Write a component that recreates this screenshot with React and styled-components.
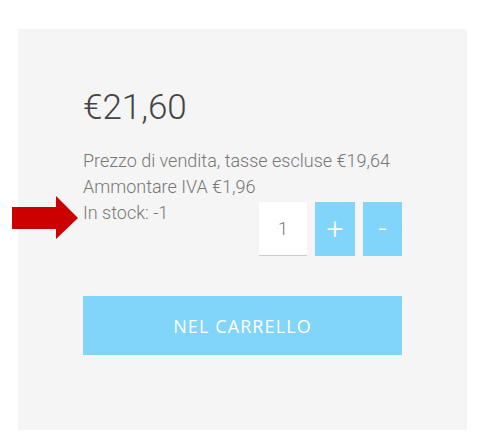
import React from "react";
import styled, { createGlobalStyle } from "styled-components";

const Global = createGlobalStyle`
  html, body { margin: 0; padding: 0; background: #ffffff; }
  body { width: 495px; height: 448px; overflow: hidden; position: relative; }
`;

const Page = styled.div`
  padding: 29px 28px 18px 18px;
  position: relative;
`;

const Panel = styled.section`
  background: #f5f5f5;
  height: 401px;
  box-sizing: border-box;
  padding: 57px 65px 0 65px;
  display: flex;
  flex-direction: column;
  font-family: Roboto, "Liberation Sans", sans-serif;
  font-weight: 300;
`;

const Price = styled.div`
  font-size: 35px;
  line-height: 44px;
  color: #444444;
  margin-bottom: 18px;
`;

const Info = styled.div`
  font-size: 18px;
  line-height: 26px;
  white-space: nowrap;
  color: #777777;
`;

const StockRow = styled.div`
  display: flex;
  justify-content: space-between;
  align-items: flex-start;
`;

const QtyGroup = styled.div`
  display: flex;
  gap: 8px;
  margin-top: 2px;
`;

const QtyInput = styled.div`
  width: 48px;
  height: 53px;
  background: #ffffff;
  border-bottom: 1px solid #cccccc;
  display: flex;
  align-items: center;
  justify-content: center;
  font-size: 18px;
  color: #777777;
`;

const QtyButton = styled.button`
  width: ${(p) => p.$w}px;
  height: 54px;
  border: 0;
  padding: 0;
  background: #81d4fa;
  color: #ffffff;
  font-family: Roboto, "Liberation Sans", sans-serif;
  font-weight: 300;
  font-size: 30px;
  line-height: 1;
  display: flex;
  align-items: center;
  justify-content: center;
`;

const CartButton = styled.button`
  margin-top: 40px;
  height: 59px;
  width: 319px;
  border: 0;
  background: #81d4fa;
  color: #ffffff;
  font-family: "Open Sans", "Liberation Sans", sans-serif;
  font-weight: 400;
  font-size: 18px;
  letter-spacing: 1.1px;
  text-transform: uppercase;
`;

const Arrow = styled.svg`
  position: absolute;
  left: 12px;
  top: 196px;
`;

export default function App() {
  return (
    <Page>
      <Global />
      <Panel>
        <Price>€21,60</Price>
        <Info>Prezzo di vendita, tasse escluse €19,64</Info>
        <Info>Ammontare IVA €1,96</Info>
        <StockRow>
          <Info>In stock: -1</Info>
          <QtyGroup>
            <QtyInput>1</QtyInput>
            <QtyButton $w={40}>+</QtyButton>
            <QtyButton $w={39}>-</QtyButton>
          </QtyGroup>
        </StockRow>
        <CartButton>Nel carrello</CartButton>
      </Panel>
      <Arrow width="67" height="44" viewBox="0 0 67 44">
        <polygon points="0,11 44,11 44,0 66,22 44,43 44,33 0,33" fill="#cc0000" />
      </Arrow>
    </Page>
  );
}
